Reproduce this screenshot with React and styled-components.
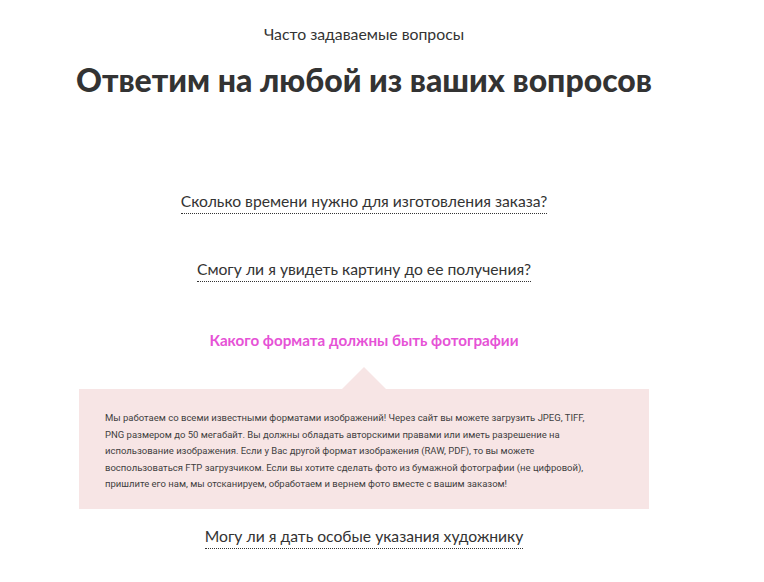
import React from "react";
import styled, { createGlobalStyle } from "styled-components";

const Global = createGlobalStyle`
  html, body { margin: 0; padding: 0; background: #fff; }
  body { font-family: Lato, "Open Sans", sans-serif; color: #333; }
`;

const Page = styled.div`
  width: 728px;
  padding-top: 24px;
  text-align: center;
`;

const Eyebrow = styled.div`
  font-size: 15.8px;
  line-height: 20px;
  color: #333;
`;

const Title = styled.h1`
  margin: 16px 0 0;
  font-size: 32px;
  line-height: 40px;
  font-weight: 900;
  color: #333;
`;

const List = styled.div`
  margin-top: 91px;
  display: flex;
  flex-direction: column;
  align-items: center;
`;

const Item = styled.div`
  width: 100%;
  display: flex;
  flex-direction: column;
  align-items: center;
  margin-bottom: ${(p) => (p.$open ? "17px" : "45px")};
  padding-top: ${(p) => (p.$open ? "3px" : "0")};
`;

const Question = styled.span`
  display: inline-block;
  font-size: ${(p) => (p.$open ? "15.2px" : "15.7px")};
  line-height: 20px;
  padding-bottom: 2px;
  color: ${(p) => (p.$open ? "#e652d6" : "#333")};
  font-weight: ${(p) => (p.$open ? 700 : 400)};
  border-bottom: 1px dotted ${(p) => (p.$open ? "transparent" : "#333")};
  cursor: pointer;
`;

const Answer = styled.div`
  margin-top: 14px;
  width: 570px;
  display: flex;
  flex-direction: column;
  align-items: center;
`;

const Arrow = styled.div`
  width: 0;
  height: 0;
  border-left: 22px solid transparent;
  border-right: 22px solid transparent;
  border-bottom: 22px solid #f7e5e5;
`;

const Panel = styled.div`
  align-self: stretch;
  background: #f7e5e5;
  padding: 21px 26px 0;
  height: 120px;
  box-sizing: border-box;
  text-align: left;
  font-family: Roboto, "Open Sans", sans-serif;
  font-size: 9.5px;
  line-height: 16.5px;
  color: #3e3e3e;
  white-space: nowrap;
`;

const faqs = [
  "Сколько времени нужно для изготовления заказа?",
  "Смогу ли я увидеть картину до ее получения?",
  "Какого формата должны быть фотографии",
  "Могу ли я дать особые указания художнику",
];

const answerLines = [
  "Мы работаем со всеми известными форматами изображений! Через сайт вы можете загрузить JPEG, TIFF,",
  "PNG размером до 50 мегабайт. Вы должны обладать авторскими правами или иметь разрешение на",
  "использование изображения. Если у Вас другой формат изображения (RAW, PDF), то вы можете",
  "воспользоваться FTP загрузчиком. Если вы хотите сделать фото из бумажной фотографии (не цифровой),",
  "пришлите его нам, мы отсканируем, обработаем и вернем фото вместе с вашим заказом!",
];

export default function App() {
  const openIndex = 2;
  return (
    <>
      <Global />
      <Page>
        <Eyebrow>Часто задаваемые вопросы</Eyebrow>
        <Title>Ответим на любой из ваших вопросов</Title>
        <List>
          {faqs.map((q, i) => (
            <Item key={q} $open={i === openIndex}>
              <Question $open={i === openIndex}>{q}</Question>
              {i === openIndex && (
                <Answer>
                  <Arrow />
                  <Panel>
                    {answerLines.map((l, j) => (
                      <React.Fragment key={j}>
                        {l}
                        {j < answerLines.length - 1 && <br />}
                      </React.Fragment>
                    ))}
                  </Panel>
                </Answer>
              )}
            </Item>
          ))}
        </List>
      </Page>
    </>
  );
}
